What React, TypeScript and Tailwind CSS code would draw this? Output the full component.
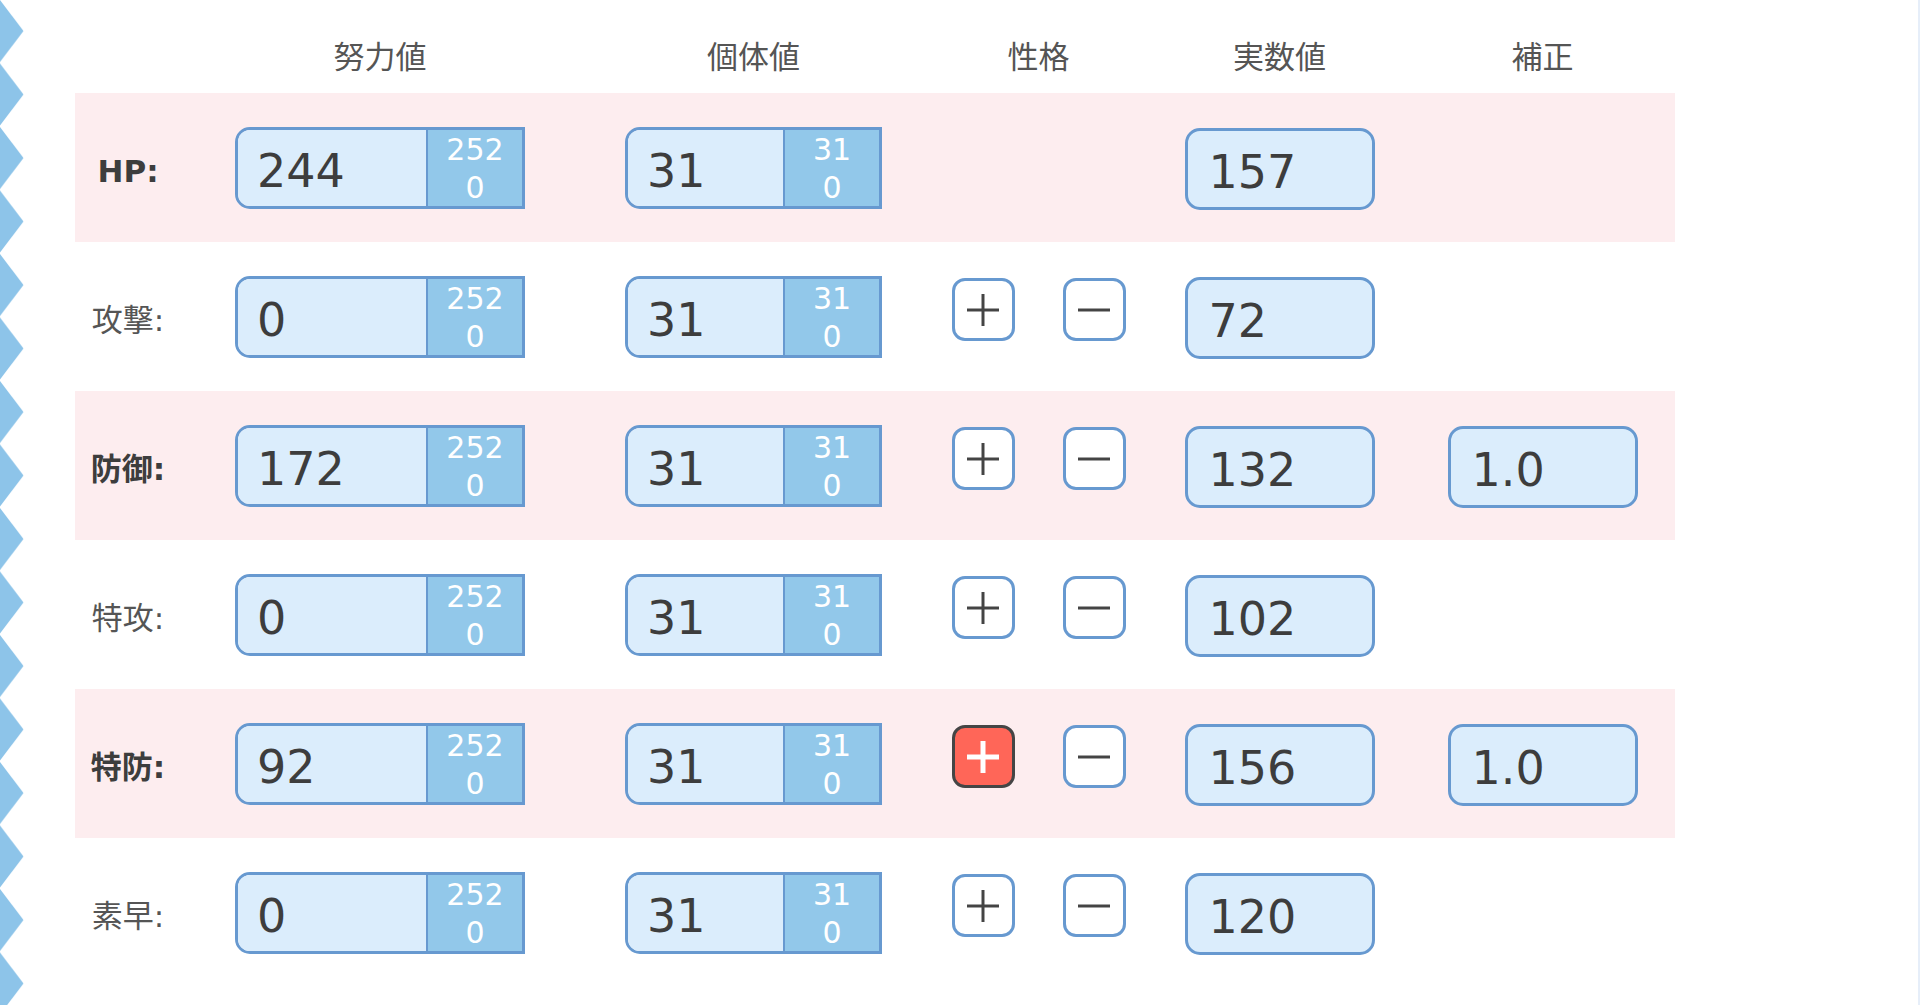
import React from 'react';

interface StatRow {
  label: string;
  ev: number;
  iv: number;
  stat: number;
  nature: 'none' | 'neutral' | 'up' | 'down';
  modifier?: string;
}

const ROWS: StatRow[] = [
  { label: 'HP:', ev: 244, iv: 31, stat: 157, nature: 'none' },
  { label: '攻撃:', ev: 0, iv: 31, stat: 72, nature: 'neutral' },
  { label: '防御:', ev: 172, iv: 31, stat: 132, nature: 'neutral', modifier: '1.0' },
  { label: '特攻:', ev: 0, iv: 31, stat: 102, nature: 'neutral' },
  { label: '特防:', ev: 92, iv: 31, stat: 156, nature: 'up', modifier: '1.0' },
  { label: '素早:', ev: 0, iv: 31, stat: 120, nature: 'neutral' },
];

const COLS = 'grid grid-cols-[106px_398px_349px_221px_261px_265px] justify-items-center';

// zigzag edge on the left side of the page
const ZigZag: React.FC = () => (
  <svg width="24" height="1005" className="block">
    <defs>
      <pattern id="zz" width="24" height="63.5" patternUnits="userSpaceOnUse" y="-1">
        <polygon points="0,1 23.5,32 0,63" fill="#8dc4e9" />
      </pattern>
    </defs>
    <rect width="24" height="1005" fill="url(#zz)" />
  </svg>
);

const SplitBox: React.FC<{ value: number; max: number; inputW: string }> = ({ value, max, inputW }) => (
  <div className="flex h-[82px] rounded-l-[15px] border-[3px] border-[#6799d0] overflow-hidden">
    <div className={`${inputW} bg-[#dbedfc] flex items-center pl-[19px] pt-[7px] text-[46px] text-[#3d3d3d]`}>
      {value}
    </div>
    <div className="w-[96px] bg-[#92c8ea] border-l-2 border-[#6799d0] flex flex-col items-center justify-center pt-[2px] text-[30px] leading-[38px] text-white">
      <span>{max}</span>
      <span>0</span>
    </div>
  </div>
);

const ValueBox: React.FC<{ value: string | number }> = ({ value }) => (
  <div className="w-[190px] h-[82px] mt-[1px] rounded-[15px] border-[3px] border-[#6799d0] bg-[#dbedfc] flex items-center pl-[21px] pt-[7px] text-[46px] text-[#3d3d3d]">
    {value}
  </div>
);

const NatureButton: React.FC<{ kind: 'plus' | 'minus'; active?: boolean }> = ({ kind, active }) => (
  <button
    type="button"
    className={`w-[63px] h-[63px] mt-[1px] rounded-[13px] flex items-center justify-center ${
      active ? 'bg-[#ff6658] border-[3px] border-[#454545]' : 'bg-white border-[3px] border-[#6799d0]'
    }`}
  >
    <svg width="32" height="32" viewBox="0 0 32 32">
      <line x1="0" y1="16" x2="32" y2="16" stroke={active ? '#ffffff' : '#444444'} strokeWidth={active ? 5 : 3} />
      {kind === 'plus' && (
        <line x1="16" y1="0" x2="16" y2="32" stroke={active ? '#ffffff' : '#444444'} strokeWidth={active ? 5 : 3} />
      )}
    </svg>
  </button>
);

export default function App() {
  return (
    <div className="flex h-screen w-full overflow-hidden bg-white border-r-2 border-[#e6eef9] font-['DejaVu_Sans','Noto_Sans_CJK_JP',sans-serif]">
      <div className="w-[24px] shrink-0">
        <ZigZag />
      </div>

      <div className="ml-[51px] w-[1600px] shrink-0">
        {/* header */}
        <div className={`${COLS} h-[93px] items-center pt-[18px] text-[31px] text-[#555] font-['Noto_Sans_CJK_JP',sans-serif]`}>
          <div />
          <div>努力値</div>
          <div>個体値</div>
          <div>性格</div>
          <div>実数値</div>
          <div>補正</div>
        </div>

        {/* stat rows */}
        {ROWS.map((row, i) => {
          const bold = row.ev > 0;
          return (
            <div
              key={row.label}
              className={`${COLS} h-[149px] items-start pt-[34px] ${i % 2 === 0 ? 'bg-[#fdedef]' : 'bg-white'}`}
            >
              <div
                className={`h-[82px] flex items-center pt-[7px] text-[31px] ${
                  bold ? 'font-bold text-[#3d3d3d]' : 'text-[#555]'
                }`}
              >
                {row.label}
              </div>
              <SplitBox value={row.ev} max={252} inputW="w-[188px]" />
              <SplitBox value={row.iv} max={31} inputW="w-[155px]" />
              <div className="flex gap-[48px] mt-[1px]">
                {row.nature !== 'none' && (
                  <>
                    <NatureButton kind="plus" active={row.nature === 'up'} />
                    <NatureButton kind="minus" active={row.nature === 'down'} />
                  </>
                )}
              </div>
              <ValueBox value={row.stat} />
              <div>{row.modifier && <ValueBox value={row.modifier} />}</div>
            </div>
          );
        })}
      </div>
    </div>
  );
}
